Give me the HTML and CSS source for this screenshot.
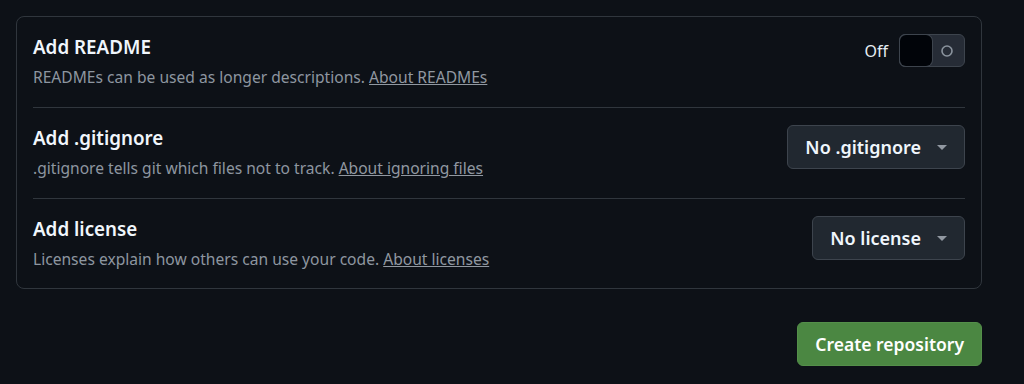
FILE: index.html
```html
<!DOCTYPE html>
<html lang="en">

<head>
    <meta charset="UTF-8">
    <meta name="viewport" content="width=device-width, initial-scale=1.0">
    <title>Create repository</title>
    <link rel="stylesheet" href="styles.css">
</head>

<body>

    <div class="page">
        <div class="options-box">
            <div class="option-row">
                <div class="option-text">
                    <h3 class="option-title">Add README</h3>
                    <p class="option-desc">READMEs can be used as longer descriptions. <a href="#">About READMEs</a></p>
                </div>
                <div class="toggle-wrap">
                    <span class="toggle-label">Off</span>
                    <button class="toggle" type="button" aria-pressed="false">
                        <span class="toggle-knob"></span>
                        <svg class="toggle-icon" width="14" height="14" viewBox="0 0 14 14">
                            <circle cx="7" cy="7" r="5" fill="none" stroke="#8b949e" stroke-width="1.6" />
                        </svg>
                    </button>
                </div>
            </div>

            <div class="option-row">
                <div class="option-text">
                    <h3 class="option-title">Add .gitignore</h3>
                    <p class="option-desc">.gitignore tells git which files not to track. <a href="#">About ignoring files</a></p>
                </div>
                <button class="select-btn" type="button">
                    No .gitignore
                    <span class="caret"></span>
                </button>
            </div>

            <div class="option-row">
                <div class="option-text">
                    <h3 class="option-title">Add license</h3>
                    <p class="option-desc">Licenses explain how others can use your code. <a href="#">About licenses</a></p>
                </div>
                <button class="select-btn" type="button">
                    No license
                    <span class="caret"></span>
                </button>
            </div>
        </div>

        <div class="actions">
            <button class="create-btn" type="submit">Create repository</button>
        </div>
    </div>

</body>

</html>
```

FILE: styles.css
```css
html,
body {
    margin: 0;
    background-color: #0d1117;
    font-family: "Noto Sans", "Open Sans", sans-serif;
    color: #e6edf3;
}

.page {
    width: 966px;
    padding: 16px;
}

.options-box {
    border: 1px solid #30363d;
    border-radius: 8px;
    padding: 0 16px;
}

.option-row {
    display: flex;
    justify-content: space-between;
    align-items: flex-start;
    padding: 16px 0 18px;
    border-bottom: 1px solid #30363d;
}

.option-row:last-child {
    border-bottom: none;
    padding-bottom: 17px;
}

.option-title {
    margin: 0;
    font-size: 18.8px;
    font-weight: 600;
    line-height: 28px;
    color: #f0f6fc;
}

.option-desc {
    margin: 4px 0 0;
    font-size: 15.6px;
    line-height: 24px;
    color: #8d96a0;
}

.option-desc a {
    color: #9198a1;
    text-decoration: underline;
}

.toggle-wrap {
    display: flex;
    align-items: center;
    gap: 11px;
    margin-top: 1px;
}

.toggle-label {
    font-size: 16px;
    color: #e6edf3;
}

.toggle {
    display: flex;
    align-items: center;
    width: 66px;
    height: 33px;
    padding: 0;
    background: #262c36;
    border: 1px solid #3d444d;
    border-radius: 6px;
    cursor: pointer;
}

.toggle-knob {
    width: 32px;
    height: 31px;
    background: #010409;
    border-radius: 6px;
    box-shadow: 0 0 0 1px #3d444d;
}

.toggle-icon {
    margin-left: 8px;
}

.select-btn {
    display: flex;
    align-items: center;
    gap: 16px;
    height: 44px;
    margin-top: 1px;
    padding: 0 17px;
    background: #212830;
    border: 1px solid #3d444d;
    border-radius: 6px;
    font-family: inherit;
    font-size: 18px;
    font-weight: 600;
    color: #f0f6fc;
    cursor: pointer;
}

.caret {
    width: 0;
    height: 0;
    border-left: 5px solid transparent;
    border-right: 5px solid transparent;
    border-top: 5px solid #9198a1;
}

.actions {
    display: flex;
    justify-content: flex-end;
    margin-top: 33px;
}

.create-btn {
    height: 44px;
    padding: 0 17px;
    background-color: #4b8742;
    border: 1px solid #548f4a;
    border-radius: 6px;
    font-family: inherit;
    font-size: 17.5px;
    font-weight: 600;
    color: #ffffff;
    cursor: pointer;
}
```
